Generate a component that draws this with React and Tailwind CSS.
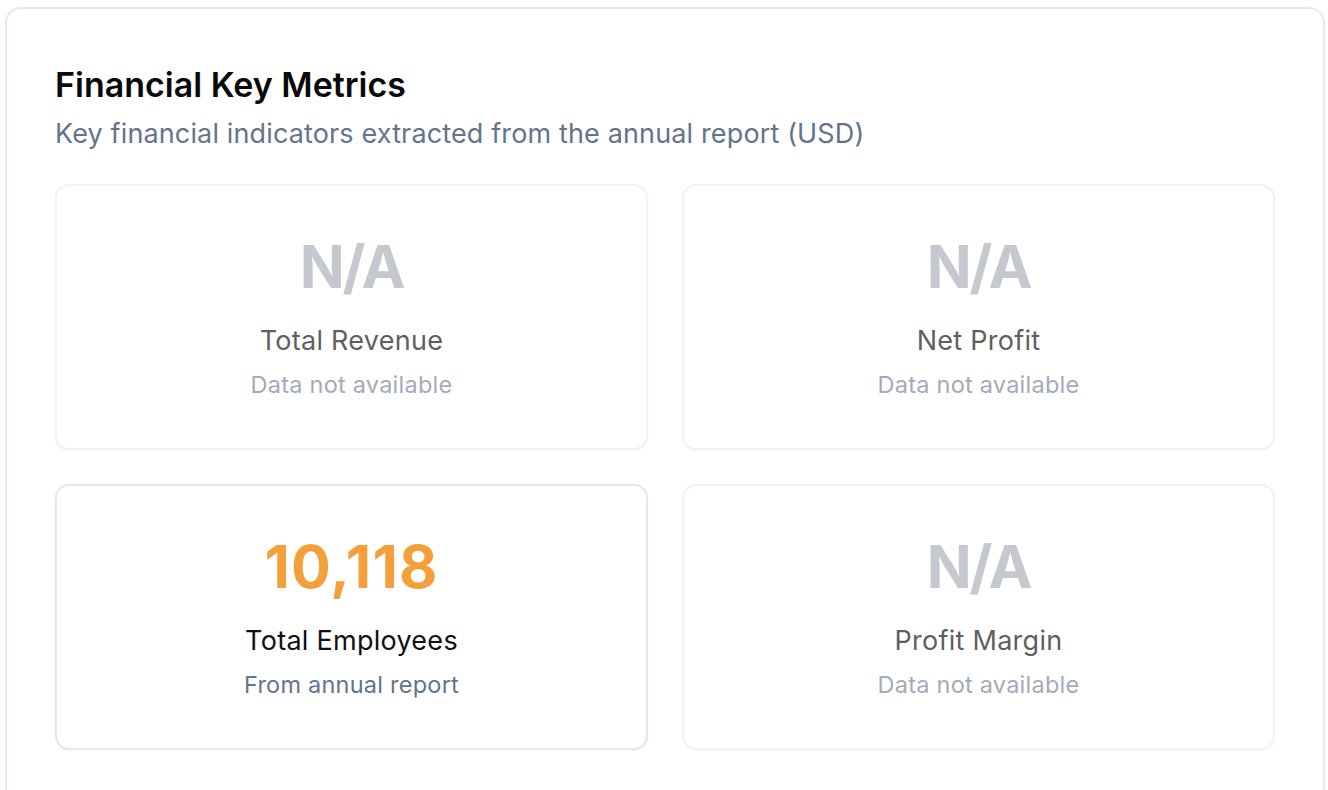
const METRICS = [
  { value: 'N/A', label: 'Total Revenue', note: 'Data not available', ok: false },
  { value: 'N/A', label: 'Net Profit', note: 'Data not available', ok: false },
  { value: '10,118', label: 'Total Employees', note: 'From annual report', ok: true },
  { value: 'N/A', label: 'Profit Margin', note: 'Data not available', ok: false },
];

function MetricCard({ m }) {
  return (
    <div
      className={
        'h-[266px] rounded-[14px] bg-white flex flex-col items-center justify-center shadow-[0_1px_2px_rgba(15,23,42,0.04)] border-2 ' +
        (m.ok ? 'border-[#e3e8f0]' : 'border-[#f0f2f5]')
      }
    >
      <div
        className={
          'text-[59px] leading-none font-bold ' +
          (m.ok ? 'text-[#f4a03a] tracking-[0.02em]' : 'text-[#c5c8cf] tracking-[-0.04em]')
        }
      >
        {m.value}
      </div>
      <div className={'mt-[31px] text-[27px] leading-none tracking-[0.01em] ' + (m.ok ? 'text-[#111111]' : 'text-[#5f5f5f]')}>
        {m.label}
      </div>
      <div className={'mt-[19px] text-[23.5px] leading-none tracking-[0.01em] ' + (m.ok ? 'text-[#64748b]' : 'text-[#a3abb9]')}>
        {m.note}
      </div>
    </div>
  );
}

export default function App() {
  return (
    <div className="bg-white h-[790px] overflow-hidden pt-[7px] pl-[5px] pr-[3px] font-['Inter',sans-serif]">
      <div className="border-2 border-[#e6e9f0] rounded-[16px] px-[48px] pt-[59px] pb-[60px]">
        <h2 className="text-[34px] leading-none font-semibold text-[#0a0a0a]">
          Financial Key Metrics
        </h2>
        <p className="mt-[18px] text-[27px] leading-none tracking-[0.005em] text-[#64748b]">
          Key financial indicators extracted from the annual report (USD)
        </p>
        <div className="mt-[37px] grid grid-cols-2 gap-x-[34px] gap-y-[34px]">
          {METRICS.map(m => (
            <MetricCard key={m.label} m={m} />
          ))}
        </div>
      </div>
    </div>
  );
}
